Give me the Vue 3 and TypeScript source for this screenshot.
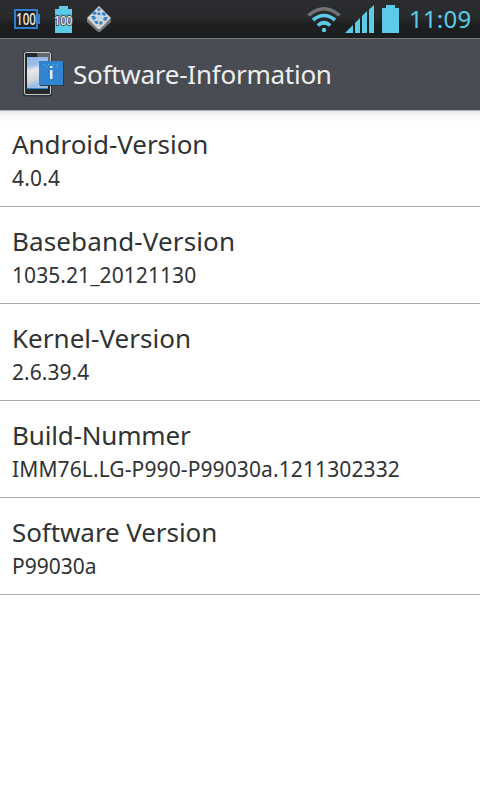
<script setup lang="ts">
interface InfoItem {
  title: string
  value: string
  titleSpacing: number
  valueSpacing: number
}

const items: InfoItem[] = [
  { title: 'Android-Version', value: '4.0.4', titleSpacing: -0.05, valueSpacing: 0.2 },
  { title: 'Baseband-Version', value: '1035.21_20121130', titleSpacing: 0.13, valueSpacing: 0.07 },
  { title: 'Kernel-Version', value: '2.6.39.4', titleSpacing: 0.02, valueSpacing: 0.05 },
  { title: 'Build-Nummer', value: 'IMM76L.LG-P990-P99030a.1211302332', titleSpacing: -0.17, valueSpacing: 0.11 },
  { title: 'Software Version', value: 'P99030a', titleSpacing: -0.08, valueSpacing: 0 },
]
</script>

<template>
  <main class="screen">
    <div class="status">
      <svg class="status-icons" width="120" height="38" viewBox="0 0 120 38">
        <path d="M37 14h3v10h-3z" fill="#2f80cf" />
        <rect x="15" y="10" width="22" height="18" fill="#202326" stroke="#2f80cf" stroke-width="2" />
        <text class="badge" x="16" y="25" font-size="16.5" textLength="20" lengthAdjust="spacingAndGlyphs">100</text>
        <path d="M59 6h9v3h4v6H55V9h4zM55 25h17v8H55z" fill="#5bcbe8" />
        <path d="M55 14l3 1.5 3-1.5 3 1.5 4-1.5 4 1.5V25H55z" fill="#5bcbe8" />
        <path d="M55 14.5l3 1.5 3-1.5 3 1.5 4-1.5 4 1.5" fill="none" stroke="#2d91c4" />
        <text class="badge outlined" x="54" y="24.5" font-size="13" textLength="18.5" lengthAdjust="spacingAndGlyphs">100</text>
        <path d="M87 18l12 10 12-9v3L100 32h-2L87 22z" fill="#77797b" />
        <path d="M99 6l12 12-11 11h-2L87 18z" fill="#d2d3d3" />
        <g fill="#3384d1">
          <path d="M97 9l2-1 2 1-1 2h-2zM94 11l3 2-2 2-3-1zM102 12l4 1-1 3-3-1zM91 16l4 0 1 3-3 1zM104 17h4l-2 4-3-1zM94 21l4 0 0 3-2 0zM100 21l3 1-2 3-2-1zM97 14l2-2 2 2-1 1h-2z" />
          <path d="M99 15.5l2.5 2.5-2.5 2.5-2.5-2.5z" fill="#9edcf2" />
        </g>
      </svg>
      <svg class="status-icons" width="105" height="38" viewBox="300 0 105 38">
        <g fill="none" stroke-width="3.6">
          <path d="M308.5 15.5Q324 2 339.5 15.5" stroke="#707476" />
          <path d="M313 20Q324 11 335 20" stroke="#5bcbe8" />
          <path d="M317.8 25.5Q324 20 330.2 25.5" stroke="#5bcbe8" />
        </g>
        <circle cx="324" cy="30" r="2.2" fill="#5bcbe8" />
        <path d="M345 33l8-8v8zM355 33V23l5-5v15zM362 33V16l5-5v22zM369 33V9.5l5-4.5v28zM386 5h9v3h4v25h-17V8h4z" fill="#5bcbe8" />
      </svg>
      <span class="clock">11:09</span>
    </div>
    <header class="header">
      <svg class="app-icon" width="44" height="50" viewBox="22 50 44 50">
        <defs>
          <linearGradient id="display" x2="0.15" y2="1">
            <stop offset="0" stop-color="#8bb5e4" />
            <stop offset=".3" stop-color="#9ebfe5" />
            <stop offset=".45" stop-color="#e7e8ea" />
            <stop offset=".75" stop-color="#d5d7da" />
            <stop offset=".95" stop-color="#9ebfe5" />
          </linearGradient>
        </defs>
        <rect x="23" y="51.5" width="29" height="45" rx="2" fill="#303336" />
        <rect x="24.5" y="52.5" width="26" height="42" rx="1.5" fill="#25282a" stroke="#c5c6c7" />
        <path d="M37 53h13v14H38z" fill="#66696b" />
        <path d="M27 57h21v31H27z" fill="url(#display)" />
        <path d="M27 88h21v1H27z" fill="#2f83d3" />
        <path d="M40 62h24v24H40z" fill="#34393e" />
        <path d="M39 61h24v24H39z" fill="#3084d2" />
        <path d="M50 66h2.5v2H50zM50 70h2.5v9H50z" fill="#e5edf5" />
        <path d="M44 64h1v1h-1zM48 64h1v1h-1zM53 64h1v1h-1zM57 64h1v1h-1zM46 66h1v1h-1zM56 66h1v1h-1z" fill="#60c4e4" />
      </svg>
      <h1>Software-Information</h1>
    </header>
    <section class="list">
      <div v-for="item in items" :key="item.title" class="item">
        <div class="title"><span :style="{ letterSpacing: item.titleSpacing + 'px' }">{{ item.title }}</span></div>
        <div class="value"><span :style="{ letterSpacing: item.valueSpacing + 'px' }">{{ item.value }}</span></div>
      </div>
    </section>
  </main>
</template>

<style>
body {
  background: #fff;
}
</style>

<style scoped>
.screen {
  width: 480px;
  height: 800px;
  overflow: hidden;
  background: #fff;
  color: #303334;
  font-family: "Noto Sans", sans-serif;
}
.status {
  box-sizing: border-box;
  height: 38px;
  display: flex;
  justify-content: space-between;
  background: linear-gradient(#2b2d30 0, #282a2c 18px, #1d1f21 24px, #1b1c1e 38px);
}
.status-icons:nth-child(2) {
  margin-left: auto;
}
.badge {
  font-family: "Noto Sans", sans-serif;
  font-weight: 500;
  fill: #eee;
}
.outlined {
  stroke: #44484b;
  stroke-width: 2px;
  paint-order: stroke;
}
.clock {
  width: 75px;
  padding-left: 4px;
  box-sizing: border-box;
  line-height: 38px;
  font-size: 24px;
  letter-spacing: 0.2px;
  color: #5bcbe8;
  white-space: nowrap;
}
.header {
  box-sizing: border-box;
  height: 72px;
  display: flex;
  align-items: center;
  padding-left: 22px;
  gap: 7px;
  background: #494d53;
  border-top: 1px solid #75777a;
}
h1 {
  margin: 0;
  padding-bottom: 2px;
  font-size: 26px;
  line-height: 36px;
  font-weight: 400;
  letter-spacing: -0.25px;
  color: #efefef;
  white-space: nowrap;
}
.list {
  background: linear-gradient(#aeb0b5 0 1px, #e9e9eb 1px, #f7f7f7 5px, #fff 13px);
}
.item {
  box-sizing: border-box;
  height: 97px;
  padding: 16px 12px 0;
  border-bottom: 1px solid #acadb3;
  white-space: nowrap;
}
.title {
  font-size: 26px;
  line-height: 36px;
}
.value {
  font-size: 21px;
  line-height: 32px;
}
</style>
